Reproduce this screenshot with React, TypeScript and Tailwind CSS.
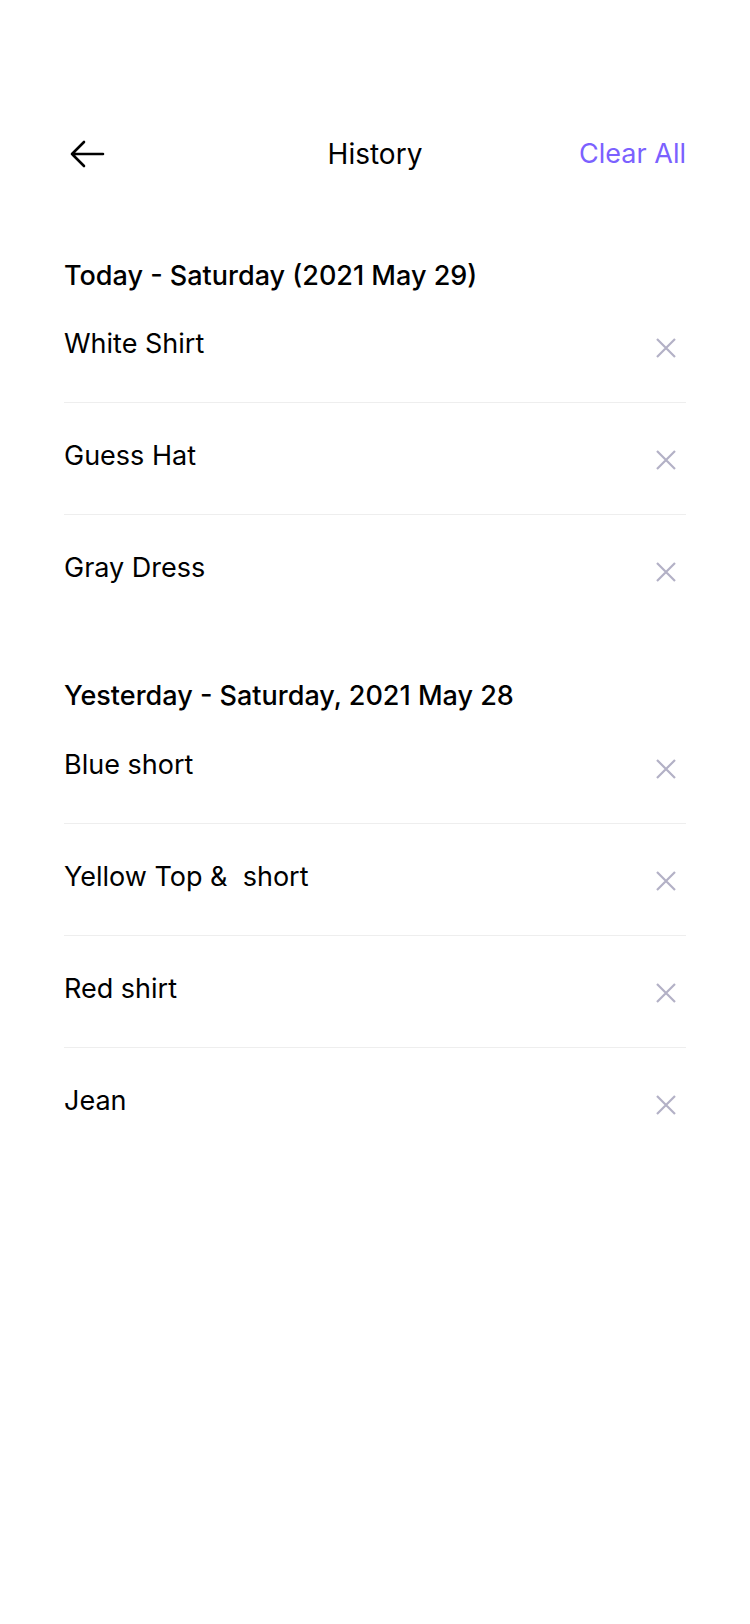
const TODAY = ["White Shirt", "Guess Hat", "Gray Dress"];
const YESTERDAY = ["Blue short", "Yellow Top &  short", "Red shirt", "Jean"];

function BackArrow() {
  return (
    <svg width="36" height="30" viewBox="0 0 36 30" fill="none">
      <path
        d="M34 15H3M15 3L3 15l12 12"
        stroke="#000"
        strokeWidth="2.6"
        strokeLinecap="round"
        strokeLinejoin="round"
      />
    </svg>
  );
}

function CloseIcon() {
  return (
    <svg width="22" height="22" viewBox="0 0 22 22" fill="none">
      <path d="M2 2l18 18M20 2L2 20" stroke="#B3B1C6" strokeWidth="2.2" />
    </svg>
  );
}

function Row({ label, last }: { label: string; last?: boolean }) {
  return (
    <div
      className={
        "flex h-[112px] items-start justify-between pt-[38px] " +
        (last ? "" : "border-b border-[#EEEEEE]")
      }
    >
      <span className="whitespace-pre text-[27px] leading-[30px] text-black">{label}</span>
      <span className="mt-[8px] mr-[9px]">
        <CloseIcon />
      </span>
    </div>
  );
}

function Section({ title, items }: { title: string; items: string[] }) {
  return (
    <section>
      <h2 className="text-[27px] leading-[30px] font-medium text-black">{title}</h2>
      {items.map((item, i) => (
        <Row key={item} label={item} last={i === items.length - 1} />
      ))}
    </section>
  );
}

export default function App() {
  return (
    <div
      className="min-h-[1624px] w-[750px] bg-white px-[64px] pt-[130px]"
      style={{ fontFamily: "Inter, 'Noto Sans', sans-serif" }}
    >
      <header className="grid h-[48px] grid-cols-[1fr_auto_1fr] items-center">
        <button className="ml-[5px] flex items-center justify-self-start" aria-label="Back">
          <BackArrow />
        </button>
        <h1 className="text-[28px] leading-[32px] text-black">History</h1>
        <button className="justify-self-end text-[27px] leading-[32px] text-[#7B61FF]">
          Clear All
        </button>
      </header>

      <div className="mt-[83px]">
        <Section title="Today - Saturday (2021 May 29)" items={TODAY} />
      </div>
      <div className="mt-[54px] [&>section>h2]:mb-[1px]">
        <Section title="Yesterday - Saturday, 2021 May 28" items={YESTERDAY} />
      </div>
    </div>
  );
}
